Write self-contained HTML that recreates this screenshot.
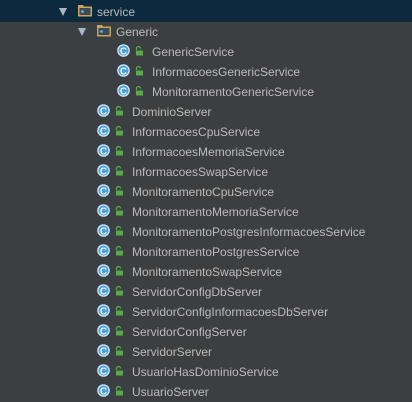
<!DOCTYPE html>
<html><head><style>
html,body{margin:0;padding:0;width:412px;height:402px;overflow:hidden;background:#3c3f41;font-family:"Liberation Sans",sans-serif;}
.r{position:absolute;left:0;width:412px;height:20px;}
.t{position:absolute;top:3px;font-size:12px;color:#bbbbbb;white-space:nowrap;line-height:14px;}
.sel{background:#0d293e;}
svg{position:absolute;}
</style></head><body>
<div class="r sel" style="top:0;height:22px"></div>
<svg width="412" height="402" style="left:0;top:0">
<defs>
<g id="c"><circle cx="6.5" cy="6.5" r="6.3" fill="#cfe6f5"/><circle cx="6.5" cy="6.5" r="5" fill="#4a9fd6"/><text x="6.5" y="10.3" font-size="10" font-weight="bold" text-anchor="middle" fill="#e8f4fc" font-family="Liberation Sans">C</text></g>
<g id="l"><path d="M1.5 4 V2.5 a2 2 0 0 1 4 0" fill="none" stroke="#5aa84a" stroke-width="1.3"/><rect x="1" y="4.5" width="7" height="5" fill="#5aa84a"/></g>
<g id="f"><path d="M0 1 h5 l1 1.5 h8 v10 h-14z" fill="#c9a45c"/><rect x="1.5" y="4" width="11" height="7" fill="#3d4a55"/><circle cx="4.5" cy="7.5" r="1.4" fill="#5ab4e8"/></g>
</defs>
<path d="M59 8 h8 l-4 8z" fill="#a9b7c6"/>
<use href="#f" x="78" y="4"/>
<path d="M78 28 h8 l-4 8z" fill="#a9b7c6"/>
<use href="#f" x="97" y="24"/>
<use href="#c" x="117" y="44"/><use href="#l" x="135" y="46"/>
<use href="#c" x="117" y="64"/><use href="#l" x="135" y="66"/>
<use href="#c" x="117" y="84"/><use href="#l" x="135" y="86"/>
<use href="#c" x="97" y="104"/><use href="#l" x="115" y="106"/>
<use href="#c" x="97" y="124"/><use href="#l" x="115" y="126"/>
<use href="#c" x="97" y="144"/><use href="#l" x="115" y="146"/>
<use href="#c" x="97" y="164"/><use href="#l" x="115" y="166"/>
<use href="#c" x="97" y="184"/><use href="#l" x="115" y="186"/>
<use href="#c" x="97" y="204"/><use href="#l" x="115" y="206"/>
<use href="#c" x="97" y="224"/><use href="#l" x="115" y="226"/>
<use href="#c" x="97" y="244"/><use href="#l" x="115" y="246"/>
<use href="#c" x="97" y="264"/><use href="#l" x="115" y="266"/>
<use href="#c" x="97" y="284"/><use href="#l" x="115" y="286"/>
<use href="#c" x="97" y="304"/><use href="#l" x="115" y="306"/>
<use href="#c" x="97" y="324"/><use href="#l" x="115" y="326"/>
<use href="#c" x="97" y="344"/><use href="#l" x="115" y="346"/>
<use href="#c" x="97" y="364"/><use href="#l" x="115" y="366"/>
<use href="#c" x="97" y="384"/><use href="#l" x="115" y="386"/>
</svg>
<div class="t" style="left:97px;top:5px">service</div>
<div class="t" style="left:116px;top:25px">Generic</div>
<div class="t" style="left:152px;top:45px">GenericService</div>
<div class="t" style="left:152px;top:65px">InformacoesGenericService</div>
<div class="t" style="left:152px;top:85px">MonitoramentoGenericService</div>
<div class="t" style="left:132px;top:105px">DominioServer</div>
<div class="t" style="left:132px;top:125px">InformacoesCpuService</div>
<div class="t" style="left:132px;top:145px">InformacoesMemoriaService</div>
<div class="t" style="left:132px;top:165px">InformacoesSwapService</div>
<div class="t" style="left:132px;top:185px">MonitoramentoCpuService</div>
<div class="t" style="left:132px;top:205px">MonitoramentoMemoriaService</div>
<div class="t" style="left:132px;top:225px">MonitoramentoPostgresInformacoesService</div>
<div class="t" style="left:132px;top:245px">MonitoramentoPostgresService</div>
<div class="t" style="left:132px;top:265px">MonitoramentoSwapService</div>
<div class="t" style="left:132px;top:285px">ServidorConfigDbServer</div>
<div class="t" style="left:132px;top:305px">ServidorConfigInformacoesDbServer</div>
<div class="t" style="left:132px;top:325px">ServidorConfigServer</div>
<div class="t" style="left:132px;top:345px">ServidorServer</div>
<div class="t" style="left:132px;top:365px">UsuarioHasDominioService</div>
<div class="t" style="left:132px;top:385px">UsuarioServer</div>
</body></html>
